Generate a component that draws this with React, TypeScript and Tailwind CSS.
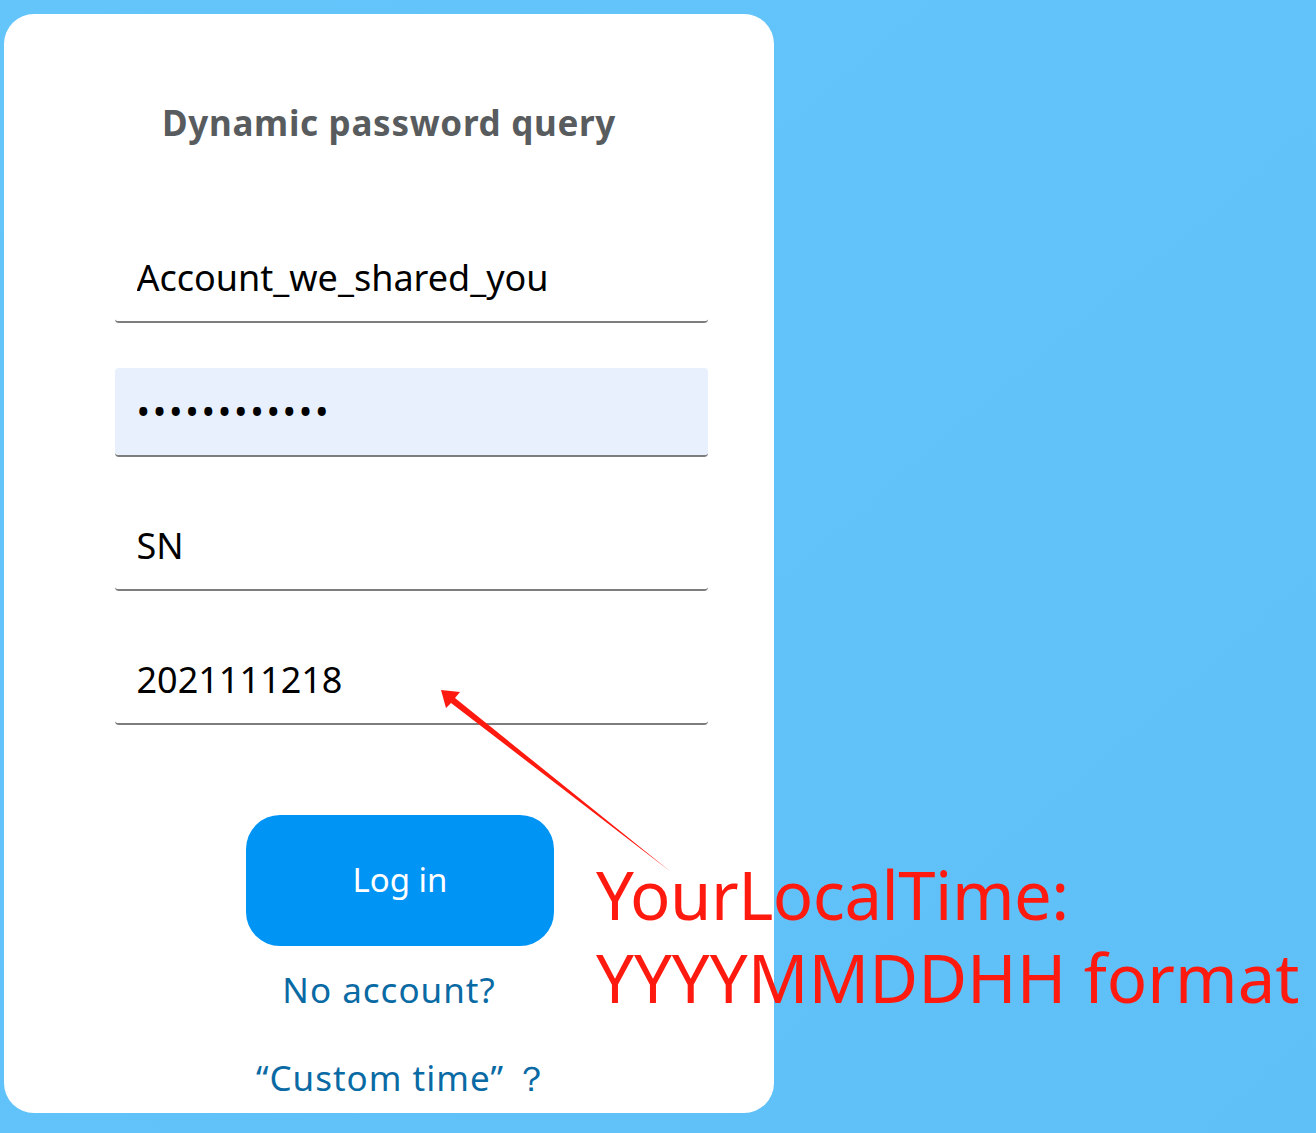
import { useState } from "react";

function Field({ value, type = "text", filled = false }: { value: string; type?: string; filled?: boolean }) {
  const [v, setV] = useState(value);
  return (
    <input
      type={type}
      value={v}
      onChange={e => setV(e.target.value)}
      className={
        "w-[593px] h-[89px] px-[22px] rounded-[4px] border-b-2 border-[#7d7d7d] outline-none text-[36px] text-black " +
        (filled ? "bg-[#e8f0fe] tracking-[2.7px]" : "bg-white")
      }
    />
  );
}

export default function App() {
  return (
    <div className="relative w-full min-h-[1133px] bg-gradient-to-br from-[#63c5fa] to-[#5fc0f8] pt-[14px] pl-[4px] font-['Noto_Sans',sans-serif]">
      <div className="w-[770px] h-[1099px] rounded-[30px] bg-white flex flex-col items-center pt-[83px]">
        <h1 className="text-[35px] font-bold text-[#585c5e] tracking-[0.7px]">Dynamic password query</h1>

        <div className="mt-[84px] flex flex-col gap-[45px] ml-[44px]">
          <Field value="Account_we_shared_you" />
          <Field value="passwordxxxx" type="password" filled />
          <Field value="SN" />
          <Field value="2021111218" />
        </div>

        <button className="mt-[90px] w-[308px] h-[131px] rounded-[34px] bg-[#0094f5] text-white text-[33px] ml-[22px]">
          Log in
        </button>

        <a className="mt-[18px] text-[35px] text-[#0a6aa4] tracking-[1px]">No account?</a>
        <a className="mt-[36px] ml-[28px] text-[35px] text-[#0a6aa4] tracking-[1px]">“Custom time” ？</a>
      </div>

      <svg className="absolute left-0 top-0 pointer-events-none" width="1316" height="1133">
        <polygon points="441,690 460,692 455,698 671,872 451,703 446,708" fill="#ff1a0f" />
      </svg>
      <div className="absolute left-[596px] top-[853px] text-[67px] leading-[83px] text-[#ff1a0f] font-['Noto_Sans',sans-serif]">
        <div className="tracking-[-0.5px]">YourLocalTime:</div>
        <div>YYYYMMDDHH format</div>
      </div>
    </div>
  );
}
